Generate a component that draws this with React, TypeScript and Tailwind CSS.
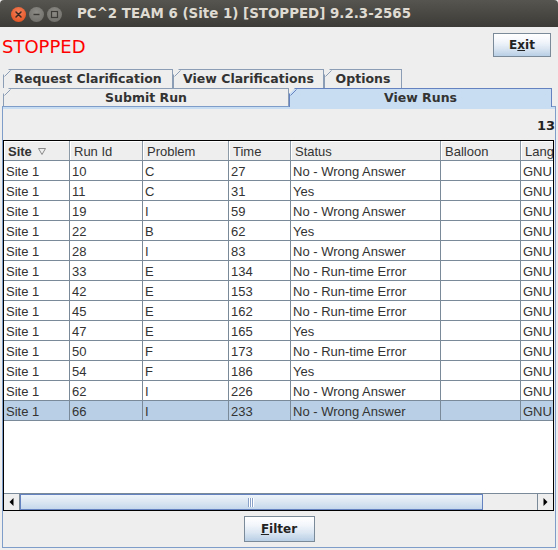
import React from 'react';

const rows = [
  ['10', 'C', '27', 'No - Wrong Answer'],
  ['11', 'C', '31', 'Yes'],
  ['19', 'I', '59', 'No - Wrong Answer'],
  ['22', 'B', '62', 'Yes'],
  ['28', 'I', '83', 'No - Wrong Answer'],
  ['33', 'E', '134', 'No - Run-time Error'],
  ['42', 'E', '153', 'No - Run-time Error'],
  ['45', 'E', '162', 'No - Run-time Error'],
  ['47', 'E', '165', 'Yes'],
  ['50', 'F', '173', 'No - Run-time Error'],
  ['54', 'F', '186', 'Yes'],
  ['62', 'I', '226', 'No - Wrong Answer'],
  ['66', 'I', '233', 'No - Wrong Answer'],
];

const colW = ['w-[66px]', 'w-[73px]', 'w-[86px]', 'w-[62px]', 'w-[150px]', 'w-[80px]', 'w-[90px]'];
const headers = ['Site', 'Run Id', 'Problem', 'Time', 'Status', 'Balloon', 'Lang'];

const font = "font-['DejaVu_Sans',sans-serif]";
const cellFont = "font-['Liberation_Sans',Arial,sans-serif] text-[13px]";
const btnCls = "flex items-center justify-center border border-[#7a8a99] bg-[linear-gradient(to_bottom,#ffffff_0%,#f2f6fb_35%,#dbe6f2_65%,#b8cfe5_100%)] text-[12px] font-bold text-[#222]";

const Tab: React.FC<{ label: string; className: string; selected?: boolean }> = ({ label, className, selected }) => (
  <div
    className={`relative flex items-center justify-center border border-b-0 [clip-path:polygon(6px_0,100%_0,100%_100%,0_100%,0_6px)] ${
      selected ? 'bg-[#c8ddf2] border-[#6382bf] z-10' : 'bg-[#eeeeee] border-[#8a9db5]'
    } ${className}`}
  >
    <svg className="absolute left-0 top-0" width="7" height="7">
      <line x1="0.5" y1="6.5" x2="6.5" y2="0.5" stroke={selected ? '#6382bf' : '#8a9db5'} strokeWidth="1" />
    </svg>
    <span className="text-[12.5px] font-bold text-[#333] leading-none pt-[1px]">{label}</span>
  </div>
);

const TitleButton: React.FC<{ kind: 'close' | 'min' | 'max' }> = ({ kind }) => (
  <div
    className={`w-[15px] h-[15px] rounded-full flex items-center justify-center ${
      kind === 'close'
        ? 'bg-[radial-gradient(circle_at_50%_35%,#f4805a,#df4a17)]'
        : 'bg-[radial-gradient(circle_at_50%_35%,#8e8c86,#6b6964)]'
    }`}
  >
    <svg width="9" height="9" viewBox="0 0 9 9">
      {kind === 'close' && (
        <path d="M2 2 L7 7 M7 2 L2 7" stroke="#3a2a24" strokeWidth="1.5" strokeLinecap="round" />
      )}
      {kind === 'min' && <path d="M1.5 4.5 H7.5" stroke="#3c3b37" strokeWidth="1.4" />}
      {kind === 'max' && <rect x="1.5" y="1.5" width="6" height="6" fill="none" stroke="#3c3b37" strokeWidth="1.2" />}
    </svg>
  </div>
);

const App: React.FC = () => {
  return (
    <div className={`w-[558px] h-[550px] bg-[#eeeeee] overflow-hidden ${font}`}>
      {/* Title bar */}
      <div className="h-[27px] bg-[linear-gradient(to_bottom,#56554f,#3c3b37)] flex items-center rounded-t-[4px]">
        <div className="flex items-center gap-[3px] pl-[11px] pt-[2px]">
          <TitleButton kind="close" />
          <TitleButton kind="min" />
          <TitleButton kind="max" />
        </div>
        <span className="ml-[15px] text-[13.4px] font-bold text-[#dfdbd2] pt-[1px]">PC^2 TEAM 6 (Site 1) [STOPPED] 9.2.3-2565</span>
      </div>

      {/* Header */}
      <div className="h-[42px] flex justify-between items-start">
        <span className="mt-[10px] ml-[2px] text-[18px] leading-[20px] text-[#ff0000]">STOPPED</span>
        <button className={`${btnCls} mt-[6px] mr-[7px] w-[58px] h-[24px]`}>
          E<span className="underline">x</span>it
        </button>
      </div>

      {/* Tabs */}
      <div className="ml-[3px]">
        <div className="flex h-[19px]">
          <Tab label="Request Clarification" className="w-[170px] h-[19px]" />
          <Tab label="View Clarifications" className="w-[151px] h-[19px]" />
          <Tab label="Options" className="w-[78px] h-[19px]" />
        </div>
        <div className="flex h-[18px] items-start">
          <Tab label="Submit Run" className="w-[286px] h-[18px]" />
          <Tab label="View Runs" selected className="w-[263px] h-[19px]" />
        </div>
      </div>

      {/* Content */}
      <div className="ml-[2px] w-[554px] h-[442px] border border-[#7f9dc9] flex flex-col">
        <div className="border-t-2 border-[#c8ddf2] h-[33px] flex justify-end items-start">
          <span className="mt-[9px] text-[13px] font-bold text-[#222] leading-[16px]">13</span>
        </div>

        {/* Table */}
        <div className="w-[551px] h-[371px] border border-black bg-white flex flex-col overflow-hidden">
          <div className="flex h-[20px] bg-[#eeeeee] border-b border-[#7a8a99] shrink-0">
            {headers.map((h, i) => (
              <div
                key={h}
                className={`${colW[i]} shrink-0 h-full border-r border-[#8c9aa8] shadow-[inset_1px_1px_0_#ffffff] flex items-center pl-[4px] pt-[2px] ${cellFont} text-[#333] whitespace-nowrap overflow-hidden`}
              >
                {i === 0 ? (
                  <>
                    <span className="font-bold">Site</span>
                    <svg className="ml-[6px]" width="8" height="7" viewBox="0 0 8 7">
                      <path d="M0.5 0.5 H7.5 L4 6.5 Z" fill="none" stroke="#8a8a8a" strokeWidth="1" />
                    </svg>
                  </>
                ) : (
                  h
                )}
              </div>
            ))}
          </div>
          {rows.map((r, ri) => {
            const cells = ['Site 1', ...r, '', 'GNU'];
            const selected = ri === rows.length - 1;
            return (
              <div
                key={ri}
                className={`flex h-[20px] border-b border-[#7a8a99] shrink-0 ${selected ? 'bg-[#b8cfe5]' : 'bg-white'}`}
              >
                {cells.map((c, ci) => (
                  <div
                    key={ci}
                    className={`${colW[ci]} shrink-0 h-full border-r border-[#7a8a99] flex items-center pl-[2px] pt-[2px] ${cellFont} text-[#333] whitespace-nowrap overflow-hidden`}
                  >
                    {c}
                  </div>
                ))}
              </div>
            );
          })}
          <div className="flex-1 bg-white" />

          {/* Horizontal scrollbar */}
          <div className="flex h-[17px] shrink-0 border-t border-[#7a8a99] bg-[#eeeeee]">
            <div className="w-[16px] shrink-0 border-r border-[#7a8a99] flex items-center justify-center">
              <svg width="5" height="8" viewBox="0 0 5 8">
                <path d="M4.5 0 V8 L0.5 4 Z" fill="#000" />
              </svg>
            </div>
            <div className="w-[463px] shrink-0 border border-[#6382bf] bg-[linear-gradient(to_bottom,#eef4fa,#dbe6f2_50%,#c5d8ec)] flex items-center justify-center pr-[2px]">
              <svg width="6" height="9" viewBox="0 0 6 9">
                <path d="M0.5 0 V9 M2.5 0 V9 M4.5 0 V9" stroke="#8aa2c8" strokeWidth="1" />
                <path d="M1.5 0 V9 M3.5 0 V9 M5.5 0 V9" stroke="#ffffff" strokeWidth="1" />
              </svg>
            </div>
            <div className="flex-1" />
            <div className="w-[16px] shrink-0 border-l border-[#7a8a99] flex items-center justify-center">
              <svg width="5" height="8" viewBox="0 0 5 8">
                <path d="M0.5 0 V8 L4.5 4 Z" fill="#000" />
              </svg>
            </div>
          </div>
        </div>

        <div className="flex-1 flex items-center justify-center">
          <button className={`${btnCls} w-[71px] h-[26px]`}>
            <span className="underline">F</span>ilter
          </button>
        </div>
      </div>
    </div>
  );
};

export default App;
